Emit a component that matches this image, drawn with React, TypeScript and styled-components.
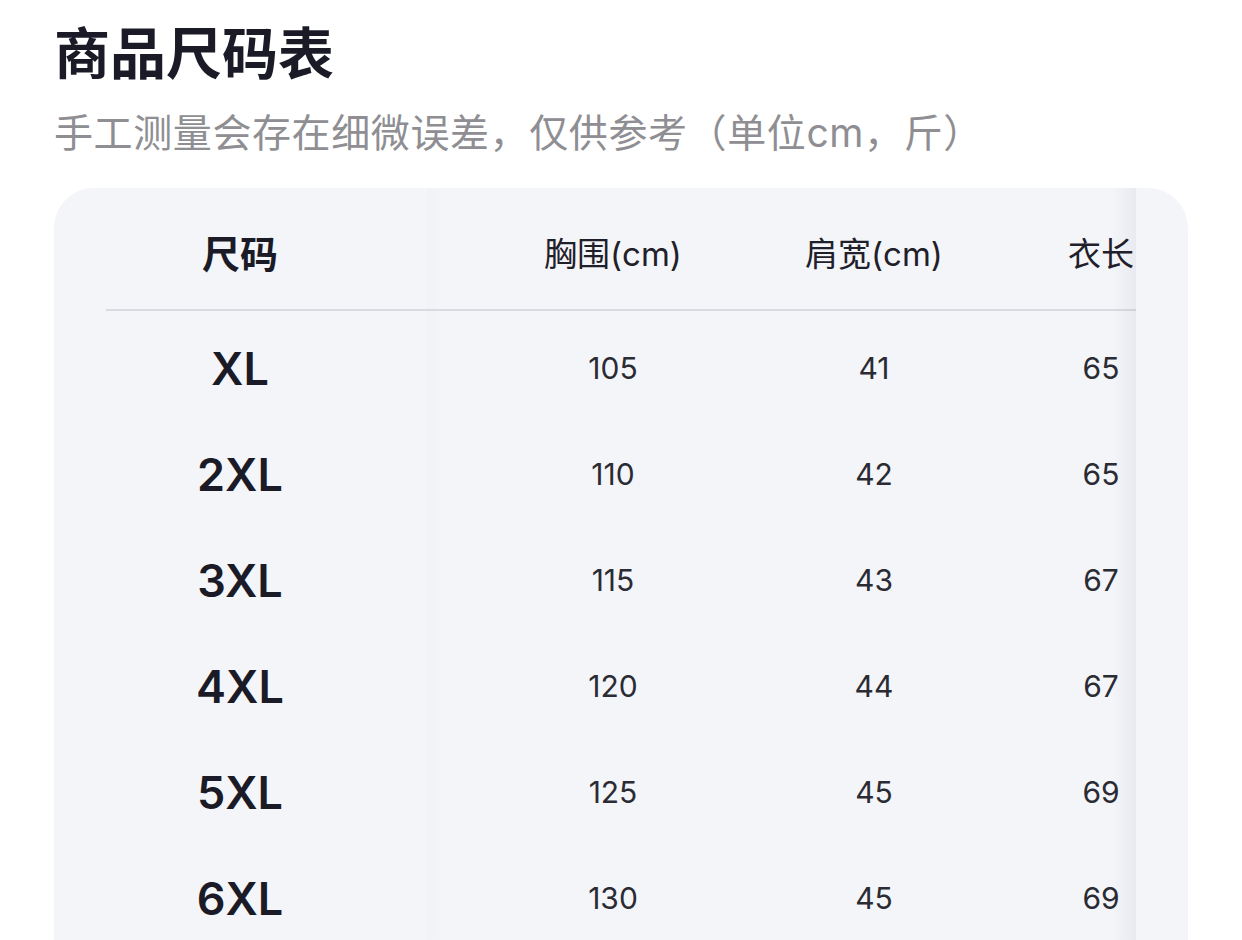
import React from "react";
import styled, { createGlobalStyle } from "styled-components";

type SizeRow = {
  size: string;
  chest: number;
  shoulder: number;
  length: number;
};

const rows: SizeRow[] = [
  { size: "XL", chest: 105, shoulder: 41, length: 65 },
  { size: "2XL", chest: 110, shoulder: 42, length: 65 },
  { size: "3XL", chest: 115, shoulder: 43, length: 67 },
  { size: "4XL", chest: 120, shoulder: 44, length: 67 },
  { size: "5XL", chest: 125, shoulder: 45, length: 69 },
  { size: "6XL", chest: 130, shoulder: 45, length: 69 },
];

const GlobalStyle = createGlobalStyle`
  body {
    margin: 0;
    background: #ffffff;
    font-family: Inter, "Noto Sans CJK SC", sans-serif;
    color: #1a1b26;
  }
`;

const App = () => {
  return (
    <>
      <GlobalStyle />
      <Page>
        <Title>商品尺码表</Title>
        <Subtitle>手工测量会存在细微误差，仅供参考（单位cm，斤）</Subtitle>
        <Card>
          <Scroller>
            <Table>
              <SizeHead>尺码</SizeHead>
              <HeadCell>胸围(cm)</HeadCell>
              <HeadCell>肩宽(cm)</HeadCell>
              <HeadCell>衣长</HeadCell>
              {rows.map((row) => (
                <React.Fragment key={row.size}>
                  <SizeCell>{row.size}</SizeCell>
                  <ValueCell>{row.chest}</ValueCell>
                  <ValueCell>{row.shoulder}</ValueCell>
                  <ValueCell>{row.length}</ValueCell>
                </React.Fragment>
              ))}
            </Table>
            <StickyShade />
            <EdgeShade />
          </Scroller>
        </Card>
      </Page>
    </>
  );
};

export default App;

const Page = styled.div`
  padding: 20px 54px 0 54px;
  width: 1134px;
`;

const Title = styled.h1`
  margin: 0;
  font-size: 56px;
  line-height: 68px;
  font-weight: 700;
  color: #1a1b26;
`;

const Subtitle = styled.p`
  margin: 19px 0 0;
  font-size: 39px;
  line-height: 52px;
  letter-spacing: 0.6px;
  font-weight: 400;
  color: #8e8e93;
  white-space: nowrap;
`;

const Card = styled.div`
  margin-top: 29px;
  background: #f4f5f9;
  border-radius: 40px 40px 0 0;
  padding: 0 52px 0 52px;
`;

const Scroller = styled.div`
  position: relative;
  overflow: hidden;
  width: 1030px;
`;

const Table = styled.div`
  display: grid;
  grid-template-columns: 321px 372px 150px 304px;
  grid-auto-rows: 106px;
  grid-template-rows: 127px;
  width: max-content;
`;

const HeadCell = styled.div`
  display: flex;
  align-items: center;
  justify-content: center;
  padding-top: 6px;
  margin-bottom: 4px;
  border-bottom: 2px solid #dadbe0;
  font-size: 33px;
  font-weight: 400;
  color: #1f2029;
  white-space: nowrap;
`;

const SizeHead = styled(HeadCell)`
  padding-right: 53px;
  font-size: 38px;
  font-weight: 700;
  color: #1a1b26;
`;

const ValueCell = styled.div`
  display: flex;
  align-items: center;
  justify-content: center;
  font-size: 30px;
  font-weight: 400;
  color: #2a2b33;
`;

const SizeCell = styled(ValueCell)`
  padding-right: 53px;
  font-size: 45px;
  font-weight: 600;
  color: #1a1b26;
`;

const StickyShade = styled.div`
  position: absolute;
  top: 0;
  bottom: 0;
  left: 321px;
  width: 16px;
  background: linear-gradient(to right, rgba(20, 30, 60, 0.012), rgba(20, 30, 60, 0));
  pointer-events: none;
`;

const EdgeShade = styled.div`
  position: absolute;
  top: 0;
  bottom: 0;
  right: 0;
  width: 24px;
  background: linear-gradient(to right, rgba(20, 30, 60, 0), rgba(20, 30, 60, 0.05));
  pointer-events: none;
`;
